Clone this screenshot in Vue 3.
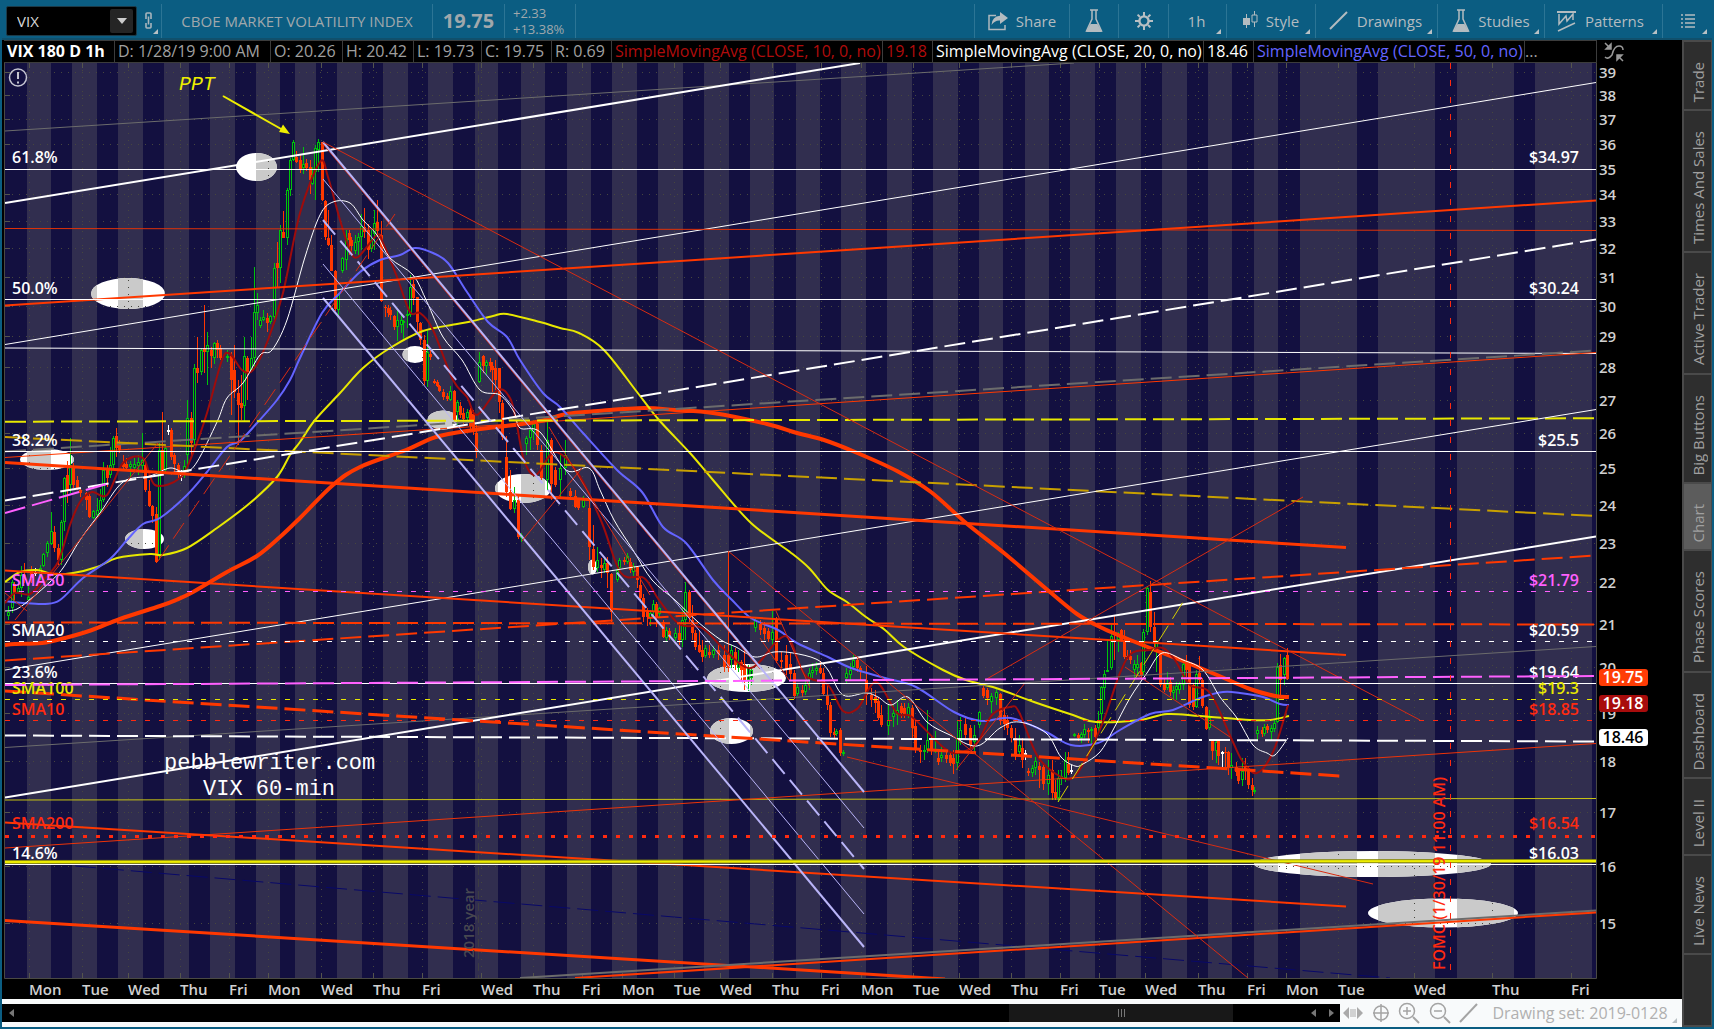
<script setup>
import { ref } from 'vue'

const symbol = ref('VIX')

const infoCells = [
  { t: 'VIX 180 D 1h', c: 'strong' },
  { t: 'D: 1/28/19 9:00 AM' },
  { t: 'O: 20.26' },
  { t: 'H: 20.42' },
  { t: 'L: 19.73' },
  { t: 'C: 19.75' },
  { t: 'R: 0.69' },
  { t: 'SimpleMovingAvg (CLOSE, 10, 0, no)', c: 'sma10' },
  { t: '19.18', c: 'sma10' },
  { t: 'SimpleMovingAvg (CLOSE, 20, 0, no)', c: 'sma20' },
  { t: '18.46', c: 'sma20' },
  { t: 'SimpleMovingAvg (CLOSE, 50, 0, no)', c: 'sma50' },
  { t: '...', c: 'more' },
]

const tabs = ['Trade', 'Times And Sales', 'Active Trader', 'Big Buttons', 'Chart', 'Phase Scores', 'Dashboard', 'Level II', 'Live News']

// Plot area: x 5..1596, y 63..978. Price axis is logarithmic.
const priceY = (p) => Math.round(72.3 + 890.6 * Math.log(39 / p)) + 0.5
const prices = Array.from({ length: 25 }, (_, i) => 39 - i)

// Lighter session bands as [start, end]
const bands = [
  [27, 51], [72, 97], [118, 143], [164, 189], [210, 235], [256, 280], [295, 316], [337, 362], [383, 408],
  [428, 453], [475, 498], [521, 545], [567, 591], [612, 637], [658, 683], [704, 729], [750, 774], [796, 820],
  [841, 866], [887, 912], [933, 958], [979, 1003], [1025, 1049], [1070, 1095], [1116, 1141], [1162, 1187],
  [1208, 1232], [1254, 1278], [1300, 1357], [1378, 1435], [1457, 1514], [1535, 1592],
]

const days = [
  [29, 'Mon'], [82, 'Tue'], [128, 'Wed'], [180, 'Thu'], [229, 'Fri'], [268, 'Mon'], [321, 'Wed'], [373, 'Thu'],
  [422, 'Fri'], [481, 'Wed'], [533, 'Thu'], [582, 'Fri'], [622, 'Mon'], [674, 'Tue'], [720, 'Wed'], [772, 'Thu'],
  [821, 'Fri'], [861, 'Mon'], [913, 'Tue'], [959, 'Wed'], [1011, 'Thu'], [1060, 'Fri'], [1099, 'Tue'],
  [1145, 'Wed'], [1198, 'Thu'], [1247, 'Fri'], [1286, 'Mon'], [1338, 'Tue'], [1414, 'Wed'], [1492, 'Thu'], [1571, 'Fri'],
]

const ellipses = [
  [256.5, 167, 20.5, 14], [128, 293.5, 37, 15.5], [415, 354.5, 12.5, 8.5], [443, 420, 15.5, 9.5],
  [47, 459.5, 27, 10.5], [144.5, 539, 19.5, 10], [523, 488.5, 28, 14.5], [592.5, 567, 4.5, 7.5],
  [746.5, 678, 39.5, 14], [731.5, 731, 21.5, 13], [1372.5, 864, 118.5, 13], [1443, 913, 75, 14.5],
]

const RED = '#ff3800'
const THIN = '#d82c12'
const LAV = '#b9b4f8'
const W = '#ffffff'
const Y = '#e8e800'
const GREY = '#6c6c6c'

// Drawings: [x1, y1, x2, y2, colour, width, dash]
const drawings = [
  [5, 131, 1074, 63, GREY, 1],
  [5, 203, 860, 63, W, 2],
  [5, 344.5, 1596, 82.5, W, 1],
  [5, 228.5, 1596, 230.5, '#e03208', 1],
  [5, 305.5, 1596, 200.5, RED, 2],
  [5, 348, 1596, 353.5, W, 1],
  [5, 451.5, 1596, 350.5, GREY, 2, '21 7'],
  [5, 457.5, 1596, 352.5, RED, 1],
  [5, 421.7, 1596, 418.3, Y, 2, '21 7'],
  [5, 437, 1596, 516, '#c8a000', 2, '21 7'],
  [5, 670, 1596, 409.5, W, 1],
  [5, 747.5, 1596, 646.5, GREY, 1],
  [5, 797.5, 1596, 536.5, W, 2],
  [5, 800, 1596, 798.5, '#c8c414', 1],
  [5, 848, 1596, 743.5, '#ee3408', 1],
  [75, 866, 1390, 978, '#080868', 1, '21 7'],
  [5, 735.5, 1596, 741.5, W, 2, '21 7'],
  [5, 500.5, 1596, 239.5, W, 2, '21 7'],
  [5, 622.5, 1596, 624.5, RED, 2, '21 7'],
  [5, 660.5, 1596, 555.5, RED, 2, '21 7'],
  [5, 570.5, 1346, 655, RED, 2],
  [5, 822.5, 1346, 906.5, RED, 2],
  [5, 462.5, 1346, 547.5, RED, 3],
  [5, 920.5, 945, 979, RED, 3],
  [5, 691, 1340, 776, RED, 3, '21 7'],
  [520, 978, 1596, 910.5, GREY, 2],
  [575, 978, 1596, 912.5, RED, 2],
  [5, 513, 107, 484, '#ff60ff', 2, '21 7'],
  [323, 144, 760, 669, THIN, 1],
  [323, 142, 864, 792, LAV, 2],
  [323, 179, 864, 828, LAV, 1],
  [323, 220, 864, 869, LAV, 2, '19 8'],
  [323, 264, 864, 914, LAV, 1],
  [323, 298, 864, 947, LAV, 2],
  [323, 142, 1156, 581, THIN, 1],
  [1156, 581, 1420, 720, THIN, 1],
  [728, 551, 1248, 978, THIN, 1],
  [847, 757, 1373, 884, THIN, 1],
  [956, 770, 1025, 683, THIN, 1],
  [985, 680, 1303, 497, THIN, 1],
  [522, 541, 582, 468, THIN, 1],
  [549, 427, 650, 595, THIN, 1],
  [776, 611, 810, 688, THIN, 1],
  [760, 638, 789, 680, THIN, 1],
  [15, 620, 158, 443, THIN, 1],
  [5, 593, 27, 611, THIN, 1],
  [158, 561, 395, 214, THIN, 1, '19 8'],
  [1125, 667, 1230, 737, THIN, 1],
  [1058, 802, 1183, 602, '#d6d000', 1, '19 8'],
]

const levels = [
  { l: '61.8%', r: '$34.97', y: 169.5, c: W, ty: 163 },
  { l: '50.0%', r: '$30.24', y: 299.5, c: W, ty: 294 },
  { l: '38.2%', r: '$25.5', y: 451.5, c: W, ty: 446 },
  { l: 'SMA50', r: '$21.79', y: 591.5, c: '#ff60ff', d: '5 9', ty: 586 },
  { l: 'SMA20', r: '$20.59', y: 641.5, c: W, d: '5 9', ty: 636 },
  { l: '23.6%', r: '$19.64', y: 683.5, c: W, ty: 678 },
  { l: 'SMA100', r: '$19.3', y: 699.5, c: Y, d: '5 9', ty: 694 },
  { l: 'SMA10', r: '$18.85', y: 720.5, c: '#ff2a10', d: '5 9', ty: 715 },
  { l: 'SMA200', r: '$16.54', y: 836.5, c: '#ff2a10', d: '4 9', w: 3, ty: 829 },
  { l: '14.6%', r: '$16.03', y: 864.5, c: W, ty: 859 },
]

// Moving averages, flat x,y lists
const averages = [
  { c: RED, w: 4, p: '5,645 15,644 42,643 65,638 92,630 120,619 160,606 176,600 193,592 227,572 257,556 280,537 300,518 333,485 360,467 406,450 436,437 474,430 536,422 566,414 598,411 644,408 675,410 713,413 767,424 797,433 824,440 855,452 897,471 931,492 966,523 1004,553 1050,592 1077,614 1100,627 1123,637 1150,648 1183,661 1217,675 1250,689 1275,696 1289,697' },
  { c: Y, w: 2, p: '5,582 20,572 37,570 53,574 73,573 97,567 117,558 150,554 163,555 187,548 217,528 250,503 277,477 290,455 300,442 315,420 340,393 363,368 390,348 423,331 457,324 473,321 493,316 507,314 540,322 560,328 579,333 604,350 637,392 659,420 690,453 713,480 751,523 790,552 809,568 828,590 847,602 866,617 885,630 904,647 943,670 966,680 996,688 1034,702 1073,715 1096,722 1140,720 1167,714 1200,716 1250,720 1270,720 1289,716' },
  { c: '#6464ff', w: 2, p: '5,601 23,603 45,604 60,600 83,578 110,559 127,540 143,524 160,518 187,495 207,472 227,447 240,441 257,423 277,400 290,380 300,358 322,313 340,293 360,272 380,260 400,255 415,248 433,253 448,263 467,292 488,322 507,337 520,360 543,393 560,407 583,433 617,470 642,492 663,527 686,543 713,580 732,600 751,618 778,630 797,643 828,657 851,668 885,678 916,687 954,712 981,721 1011,718 1046,732 1071,745 1098,743 1120,730 1150,714 1173,710 1200,698 1223,692 1240,693 1263,697 1280,704 1289,705' },
  { c: '#9e0c0c', w: 2, p: '5,603 15,593 30,594 43,580 58,562 70,525 80,502 92,492 107,495 123,463 143,458 155,485 180,478 193,453 207,413 222,360 230,354 242,370 253,370 268,340 283,293 300,213 320,162 328,177 340,220 350,250 358,257 377,235 383,243 397,277 410,312 420,313 433,330 453,380 467,397 477,415 498,390 510,398 516,420 524,460 536,475 555,452 579,475 602,523 621,573 644,578 659,600 679,624 702,628 725,650 751,668 778,640 790,640 805,675 828,685 843,711 858,708 876,682 897,713 912,717 943,747 958,753 977,743 992,715 1010,707 1019,712 1038,757 1061,777 1074,777 1087,757 1103,722 1120,673 1132,653 1150,650 1163,648 1175,660 1190,685 1210,693 1232,740 1243,762 1257,773 1273,752 1288,705' },
  { c: W, w: 1, p: '5,611 17,609 33,597 50,582 63,568 80,540 100,513 123,482 150,476 170,468 185,472 197,462 217,422 227,398 243,383 260,355 272,350 287,320 305,257 320,215 333,202 350,203 363,220 377,235 390,258 413,275 427,302 443,337 462,360 480,390 500,395 514,412 520,428 540,432 566,470 589,468 600,490 614,520 633,550 652,580 675,600 698,622 721,640 736,647 755,657 774,652 793,653 816,659 828,670 843,695 866,693 878,697 891,705 908,697 927,722 950,735 977,746 1000,728 1019,722 1046,733 1061,757 1075,766 1083,764 1100,752 1113,730 1130,698 1147,673 1162,653 1183,660 1203,670 1220,697 1237,718 1253,745 1267,753 1275,755 1288,738' },
]

function smooth(list) {
  const p = list.split(' ').map((s) => s.split(',').map(Number))
  let d = `M${p[0][0]} ${p[0][1]}`
  for (let i = 0; i < p.length - 1; i++) {
    const a = p[Math.max(i - 1, 0)]
    const b = p[i]
    const c = p[i + 1]
    const e = p[Math.min(i + 2, p.length - 1)]
    d += `C${b[0] + (c[0] - a[0]) / 6} ${b[1] + (c[1] - a[1]) / 6} ${c[0] - (e[0] - b[0]) / 6} ${c[1] - (e[1] - b[1]) / 6} ${c[0]} ${c[1]}`
  }
  return d
}

// Candles: direction, x, high, low, body top, body bottom
const candleData = `g8,606,620,612,616 g12,580,613,582,608 r14,582,600,584,592 g18,583,593,588,592 g21,566,597,575,588 r24,563,583,575,580
g28,586,600,597,600 r31,566,583,570,578 w35,568,576,572,573 g40,565,580,568,576 g43,553,567,554,566 g47,541,557,543,553 g51,512,545,531,544 r54,526,552,532,548
r58,544,565,548,560 g61,520,565,522,560 g64,477,531,478,522 r67,461,503,475,490 g70,438,493,465,485 r73,463,488,468,485
r77,476,490,480,488 r80,488,497,490,493 r86,492,510,493,500 r89,494,518,496,517 g93,510,519,511,518 g97,498,517,510,515 g100,489,513,500,510 g103,462,502,470,500
r107,465,487,470,478 g110,447,478,465,475 g113,436,468,438,465 r116,428,457,436,448 r119,440,453,444,450 r123,455,470,462,467 r126,458,470,464,468
g130,461,477,464,467 g134,458,473,464,468 g138,455,475,462,466 g142,433,473,460,466 r145,462,492,465,490 r149,480,507,491,506 r152,505,523,506,516
r156,507,563,514,562 g159,443,560,450,555 r162,412,473,450,470 g165,445,473,448,470 w168,425,435,430,431 r171,428,460,430,457 r174,453,472,455,464
r178,463,480,465,473 w181,470,481,475,476 g184,460,478,466,474 g187,400,470,418,455 r191,412,457,418,443 g194,364,445,368,440 r197,337,383,368,373 g201,348,375,350,372
r204,305,373,348,352 g207,332,385,345,352 r211,347,368,350,356 g214,342,364,343,358 r217,340,358,343,350 r220,345,360,348,358 g227,350,362,356,358 r231,352,415,356,380
r234,345,398,370,392 r238,380,445,393,405 r241,375,420,403,408 g244,337,422,356,406 r247,356,400,358,372 g251,337,371,358,370 g254,267,368,312,358
g257,293,320,305,313 g260,317,328,320,326 g263,310,321,317,320 r267,313,332,318,323 g270,315,324,316,322 g274,263,323,268,317 r277,242,287,263,268
g280,225,283,230,268 r283,211,238,232,238 g287,188,245,190,238 g290,158,196,160,190 g293,140,161,142,160 r296,151,163,157,162 r300,155,173,160,170
g303,147,174,164,168 r306,159,171,163,168 r310,160,194,167,180 g312,167,185,175,184 g315,145,200,148,172 g318,139,172,142,150 r322,142,201,142,200
r325,200,240,201,237 r328,210,246,238,245 r331,235,271,245,271 r335,270,311,271,309 g338,293,318,294,310 g342,257,273,258,271 g346,230,270,238,260
r349,230,255,233,240 r351,237,252,240,246 g355,235,254,242,251 g358,233,255,237,242 g361,214,250,226,237 r364,208,238,227,232 r368,224,259,230,250
g371,230,252,240,249 g374,210,250,223,234 r377,200,237,222,231 r381,221,302,235,301 r385,305,317,307,308 r388,305,317,308,313 r390,307,320,310,315
r394,315,330,316,327 g397,310,341,320,327 g401,315,333,320,325 g403,320,340,321,323 g407,310,328,314,316 g410,275,317,287,315 r413,280,305,284,298
r417,297,333,297,322 r420,322,345,323,340 r424,335,385,340,381 g427,330,387,352,381 r430,350,360,354,357 r434,379,384,381,383 r437,380,387,382,386
r439,385,392,386,391 r443,389,400,392,397 r447,393,401,396,399 g450,386,401,391,400 r454,390,422,391,420 g457,400,425,402,412 r460,402,418,406,415
r463,408,424,413,419 g467,409,422,412,418 r470,408,430,410,426 r473,410,435,414,430 r476,425,458,433,452 g479,352,383,362,382 r483,355,373,356,366 g486,360,375,362,366
r490,358,372,362,366 r492,362,392,366,370 r495,360,390,368,380 r499,368,413,368,402 r502,400,440,403,437 r506,436,497,457,492 r510,470,510,492,509
g514,487,513,500,509 r518,495,539,500,537 g521,533,542,535,538 g526,436,455,438,444 g530,427,450,430,438 g533,420,440,424,432 r537,423,450,424,445
r541,445,480,450,478 g547,421,490,440,480 r551,438,500,440,484 r555,467,487,470,485 g560,455,497,468,480 g565,440,475,455,468 r570,488,500,491,496
r575,490,508,496,507 r578,498,510,500,508 g583,496,508,500,507 r589,500,560,508,547 r593,525,570,549,567 g597,547,572,560,568 r601,558,578,565,568
g604,558,573,563,570 r607,557,588,563,573 r611,573,622,574,612 g617,567,582,570,580 g619,558,570,560,568 r624,557,565,560,562 g627,553,564,556,562
r630,558,573,562,570 g633,563,576,566,572 r637,566,588,567,580 r640,577,600,585,598 r643,594,622,598,617 r647,608,626,612,617 g650,610,626,613,618 g653,600,617,604,612
r656,602,627,604,617 g659,607,618,608,614 r663,620,638,622,637 g666,627,641,630,638 r669,628,640,631,637 g675,628,641,633,638 r679,622,645,633,640
g682,608,647,620,640 g685,582,640,592,620 r689,590,622,592,618 r692,605,640,620,633 r695,630,650,633,647 r699,630,653,645,652 r702,640,662,650,657
g705,645,658,648,656 r709,645,658,652,655 g713,646,658,650,655 r718,643,660,650,654 r724,645,672,655,667 r728,551,672,655,668 g731,645,668,650,660
r735,648,670,652,665 g738,650,672,662,668 r741,660,680,662,670 r744,650,690,665,680 g748,665,691,668,680 g751,668,685,670,678 g755,617,632,620,628
r760,620,635,624,630 r764,622,640,628,634 r768,628,642,631,639 g772,611,645,632,640 r776,617,663,619,661 r781,652,668,660,662 r786,645,675,655,669
r790,653,680,664,674 r794,670,699,673,696 g797,683,696,687,694 r802,685,697,690,693 g805,680,695,685,692 g809,668,690,673,680 g812,663,678,670,673
g816,662,675,668,671 r820,661,674,668,673 r823,668,695,673,694 r827,683,710,695,705 r830,702,737,705,733 r834,728,738,732,735 g836,729,736,731,734
r840,728,756,730,753 g843,750,756,752,753 g846,668,683,673,678 g850,663,680,670,675 g853,655,670,660,667 r857,658,672,660,668 r860,666,680,668,672
r866,666,705,680,695 r871,688,707,695,700 r875,690,713,697,703 r878,697,720,701,718 r881,705,727,715,725 g888,705,735,720,726 g893,705,727,713,717
g897,700,725,710,715 r901,703,718,706,713 r904,703,718,708,715 g908,703,718,707,715 r912,705,740,708,728 r915,720,753,726,750 r920,745,763,750,752
g924,745,760,750,752 g927,710,753,740,750 r931,735,755,740,750 g935,731,753,750,751 r938,750,765,758,762 g941,745,762,755,758 r946,750,763,755,759
r950,752,766,755,763 r953,750,774,758,764 g957,720,770,738,763 g960,717,745,730,740 r965,718,740,724,735 r970,725,748,728,745 g974,725,753,735,742
g979,711,728,712,725 r983,685,698,688,696 r987,688,705,690,698 g991,693,713,696,702 g996,688,705,692,698 r1000,693,725,694,720 r1004,708,730,715,724
r1007,715,735,720,728 r1011,725,742,728,738 r1015,728,760,738,755 g1019,735,757,745,752 r1022,738,768,748,760 w1025,750,760,753,754 r1028,768,776,771,773
g1032,765,777,768,773 g1035,757,775,761,768 r1039,762,788,766,770 r1043,763,790,767,784 g1048,760,795,775,784 r1052,760,800,770,793 r1055,780,800,792,798
g1058,770,802,778,798 g1061,770,785,776,779 g1065,752,782,760,778 r1068,752,775,764,773 w1071,765,774,770,771 g1074,733,737,734,736 r1078,733,741,735,738
g1081,732,743,734,738 g1084,724,738,729,735 r1088,728,743,730,732 g1091,727,745,729,731 r1095,725,743,728,737 g1098,711,733,720,728 g1101,686,726,687,714
g1104,670,700,674,688 g1107,640,672,670,672 g1111,625,670,636,668 r1114,616,660,633,634 g1118,632,652,635,640 r1121,629,642,630,640 r1124,630,659,641,657
r1127,650,660,656,657 r1130,650,664,656,660 g1134,660,678,664,670 g1137,655,674,664,668 r1141,662,680,663,676 g1143,629,675,632,672 g1147,586,635,588,632
r1150,581,632,592,627 r1154,612,647,627,642 g1156,640,672,643,650 r1160,650,687,652,685 r1164,678,692,684,690 g1167,672,690,684,688 r1170,677,696,682,692
g1173,686,700,690,693 g1176,682,700,686,690 g1179,682,694,684,690 g1183,660,690,664,685 r1186,655,677,661,670 r1189,662,708,665,705 r1193,683,710,685,707
g1196,670,708,674,707 r1199,656,683,673,680 r1202,678,708,680,706 r1206,706,730,707,729 g1209,710,730,718,728 r1212,739,760,741,751 g1216,739,763,742,751
r1218,739,765,741,756 w1222,751,767,752,753 r1225,747,768,752,753 r1228,751,775,752,768 g1231,753,779,765,768 r1236,762,776,767,772 r1238,768,784,770,781
g1242,758,786,771,780 r1245,758,780,767,770 r1248,766,789,768,785 r1252,778,796,785,790 g1254,787,794,790,792 g1257,726,740,730,734 r1262,727,737,730,734
g1264,724,736,727,734 r1267,724,733,726,730 g1271,725,741,728,732 g1274,720,732,723,729 g1277,663,723,667,722 r1280,654,697,665,680 g1284,657,685,658,675 r1287,648,680,655,679`

const colours = { g: '#00c40a', r: '#ff3800', w: '#ffffff' }
const candles = candleData.split(/\s+/).map((s) => {
  const [x, hi, lo, top, bottom] = s.slice(1).split(',').map(Number)
  return { k: s[0], x, hi, lo, top, bottom, c: colours[s[0]] }
})
</script>

<template>
  <div class="app">
    <header class="toolbar">
      <div class="symbol-box">
        <input v-model="symbol" class="symbol" type="text" aria-label="Symbol" />
        <button class="drop" aria-label="Choose symbol">
          <svg width="10" height="6"><path d="M0 0H10L5 6Z" fill="#ccc" /></svg>
        </button>
      </div>
      <button class="link" aria-label="Link">
        <svg width="10" height="20" viewBox="0 0 10 20" fill="none" stroke="#a9b6bd" stroke-width="1.6">
          <path d="M2 8V3Q2 2 3 2H6Q7 2 7 3V8M2 12V16Q2 17 3 17H6Q7 17 7 16V12M4.500 5.500V13.500" />
        </svg>
        <i class="corner"></i>
      </button>
      <div class="name">CBOE MARKET VOLATILITY INDEX</div>
      <div class="last">19.75</div>
      <div class="change"><span>+2.33</span><span>+13.38%</span></div>
      <nav class="tools">
        <button class="share">
          <svg width="20" height="19" viewBox="0 0 20 19">
            <path d="M8 3.500H1V17.500H17V13" fill="none" stroke="#aeb8bd" stroke-width="1.500" />
            <path d="M12 0L20 6L12 12V8.500Q7 8 3.500 13Q4 4.500 12 3.800Z" fill="#b4bcc0" />
          </svg>
          Share
        </button>
        <button class="w-flask" aria-label="Edit studies">
          <svg width="18" height="24" viewBox="0 0 18 24">
            <path d="M5 1H13M7 1V10L1.500 22H16.500L11 10V1" fill="none" stroke="#b4bcc0" stroke-width="1.500" />
            <path d="M5.500 15H12.500L17 23H1Z" fill="#b4bcc0" />
          </svg>
        </button>
        <button class="w-gear" aria-label="Chart settings">
          <svg width="20" height="20" viewBox="-10 -10 20 20" fill="none" stroke="#b8bfc3">
            <circle r="4.600" stroke-width="2.400" />
            <path d="M0-9V-5M0 9V5M-9 0H-5M9 0H5M-6.400-6.400L-4-4M6.400 6.400L4 4M6.400-6.400L4-4M-6.400 6.400L-4 4" stroke-width="2" />
          </svg>
        </button>
        <button class="w-time">1h<i class="corner"></i></button>
        <button class="w-style">
          <svg width="15" height="20" viewBox="0 0 15 20">
            <path d="M3.500 3V17" stroke="#b4bcc0" />
            <path d="M0 7H7V14H0Z" fill="#b4bcc0" />
            <path d="M11.500 0V4M11.500 11V16M9 4H14V11H9Z" fill="none" stroke="#b4bcc0" />
          </svg>
          Style<i class="corner"></i>
        </button>
        <button class="w-drawings">
          <svg width="20" height="20"><path d="M1 18L18 1" stroke="#b4bcc0" stroke-width="2" /></svg>
          Drawings<i class="corner"></i>
        </button>
        <button class="w-studies">
          <svg width="18" height="24" viewBox="0 0 18 24">
            <path d="M5 1H13M7 1V10L1.500 22H16.500L11 10V1" fill="none" stroke="#b4bcc0" stroke-width="1.500" />
            <path d="M5.500 15H12.500L17 23H1Z" fill="#b4bcc0" />
          </svg>
          Studies<i class="corner"></i>
        </button>
        <button class="w-patterns">
          <svg width="20" height="21" viewBox="0 0 20 21" fill="none" stroke="#b4bcc0" stroke-width="1.500">
            <path d="M0 1H19" stroke-width="2" />
            <path d="M2 3V13L9 5L10 10L16 3V9M1 20L18 12" />
          </svg>
          Patterns<i class="corner"></i>
        </button>
        <button class="w-list" aria-label="Menu">
          <svg width="14" height="14" viewBox="0 0 14 14" stroke="#b4bcc0" stroke-width="1.500">
            <path d="M0 1H2M4 1H14M0 5H2M4 5H14M0 9H2M4 9H14M0 13H2M4 13H14" />
          </svg>
          <i class="corner"></i>
        </button>
      </nav>
    </header>

    <div class="body">
      <main class="work">
        <div class="info">
          <div class="cells">
            <span v-for="(cell, i) in infoCells" :key="i" :class="cell.c">{{ cell.t }}</span>
          </div>
          <button class="fit" aria-label="Fit chart">
            <svg width="20" height="20" viewBox="0 0 20 20" fill="none" stroke="#999" stroke-width="1.500">
              <path d="M1 15Q4 18 8 13Q10 4 15 4Q19 4 19 8M1 1L6 6M19 19L14 14" />
              <path d="M7 2V7H2ZM13 18V13H18Z" fill="#999" />
            </svg>
          </button>
        </div>

        <svg class="chart" viewBox="2 63 1680 936" preserveAspectRatio="none" role="img" aria-label="VIX hourly chart">
          <defs>
            <clipPath id="plot"><rect x="5" y="63" width="1591" height="915" /></clipPath>
            <clipPath id="spots">
              <ellipse v-for="(e, i) in ellipses" :key="i" :cx="e[0]" :cy="e[1]" :rx="e[2]" :ry="e[3]" />
            </clipPath>
          </defs>
          <rect x="2" y="63" width="1680" height="936" fill="#000" />
          <g clip-path="url(#plot)">
            <rect x="5" y="63" width="1591" height="915" fill="#131040" />
            <rect v-for="b in bands" :key="b[0]" :x="b[0]" y="63" :width="b[1] - b[0]" height="915" fill="#312e4f" />
            <g clip-path="url(#spots)">
              <rect x="5" y="63" width="1591" height="915" fill="#fff" />
              <rect v-for="b in bands" :key="b[0]" :x="b[0]" y="63" :width="b[1] - b[0]" height="915" fill="#cacaca" />
            </g>
            <g stroke="#46463f" stroke-width="1" stroke-dasharray="1 6">
              <line v-for="p in prices" :key="p" x1="5" x2="1596" :y1="priceY(p)" :y2="priceY(p)" />
              <line v-for="d in days" :key="d[0]" :x1="d[0] + 0.5" :x2="d[0] + 0.5" y1="63" y2="978" />
            </g>
            <line x1="478.5" x2="478.5" y1="63" y2="978" stroke="#3c3c42" stroke-dasharray="8 4" />
            <g stroke="#55554c">
              <line v-for="p in prices" :key="p" x1="5" x2="10" :y1="priceY(p)" :y2="priceY(p)" />
              <line v-for="d in days" :key="d[0]" :x1="d[0] + 0.5" :x2="d[0] + 0.5" y1="63" y2="68" />
              <line v-for="d in days" :key="'b' + d[0]" :x1="d[0] + 0.5" :x2="d[0] + 0.5" y1="973" y2="978" />
            </g>

            <g v-for="(k, i) in candles" :key="i" shape-rendering="crispEdges">
              <line :x1="k.x + 0.5" :x2="k.x + 0.5" :y1="k.hi" :y2="k.lo" :stroke="k.c" />
              <rect v-if="k.k === 'r'" :x="k.x - 1" :y="k.top" width="3" :height="Math.max(k.bottom - k.top, 1)" :fill="k.c" />
              <rect v-else :x="k.x - 0.5" :y="k.top + 0.5" width="2" :height="Math.max(k.bottom - k.top - 1, 1)" fill="#131040" :stroke="k.c" />
            </g>

            <path v-for="a in averages" :key="a.c" :d="smooth(a.p)" fill="none" :stroke="a.c" :stroke-width="a.w" stroke-linejoin="round" />

            <line v-for="(d, i) in drawings" :key="i" :x1="d[0]" :y1="d[1]" :x2="d[2]" :y2="d[3]" :stroke="d[4]" :stroke-width="d[5]" :stroke-dasharray="d[6]" />
            <g v-for="l in levels" :key="l.l">
              <line x1="5" x2="1596" :y1="l.y" :y2="l.y" :stroke="l.c" :stroke-width="l.w || 1" :stroke-dasharray="l.d" />
              <text class="level" x="12" :y="l.ty" :fill="l.c">{{ l.l }}</text>
              <text class="level" x="1579" :y="l.ty" :fill="l.c" text-anchor="end">{{ l.r }}</text>
            </g>
            <line x1="5" y1="862" x2="1596" y2="861" stroke="#8c8c10" stroke-width="4" />
            <line x1="5" y1="862" x2="1596" y2="861" stroke="#eeee00" stroke-width="2" />
            <line x1="5" y1="685" x2="1596" y2="676" stroke="#ff60ff" stroke-width="2" stroke-dasharray="21 7" />
            <line x1="1450.5" x2="1450.5" y1="63" y2="978" stroke="#ff2a10" stroke-dasharray="6 11" />

            <text class="side" fill="#484850" transform="translate(474 958) rotate(-90)">2018 year</text>
            <text class="side event" fill="#ff2a10" transform="translate(1445 970) rotate(-90)">FOMC (1/30/19 11:00 AM)</text>

            <text class="note ppt" x="179" y="90">PPT</text>
            <path d="M223 96L282 129.500" stroke="#eeee00" stroke-width="2" />
            <path d="M290 134L279 132L283 124.500Z" fill="#eeee00" />
            <text class="note" x="164" y="769">pebblewriter.com</text>
            <text class="note" x="203" y="795">VIX 60-min</text>
          </g>

          <g fill="none" stroke="#c4c4d0" stroke-width="1.500">
            <circle cx="18" cy="77.500" r="8.500" />
            <path d="M18 72V79M18 81.500V83.500" stroke-width="2" />
          </g>

          <path d="M4.500 63V978.500H1596.500V63" fill="none" stroke="#4a4a44" />
          <g class="axis">
            <text v-for="p in prices" :key="p" x="1599" :y="priceY(p) + 5.5">{{ p }}</text>
            <text v-for="d in days" :key="d[0]" :x="d[0]" y="995">{{ d[1] }}</text>
          </g>
          <g class="badge">
            <rect x="1599" y="669" width="49" height="17" rx="3" fill="#ff3c05" />
            <rect x="1599" y="695" width="49" height="17" rx="3" fill="#a80c0c" />
            <rect x="1599" y="729" width="49" height="17" rx="3" fill="#fff" />
            <text x="1623" y="683" fill="#fff">19.75</text>
            <text x="1623" y="709" fill="#fff">19.18</text>
            <text x="1623" y="743" fill="#000">18.46</text>
          </g>
        </svg>

        <footer class="bottom">
          <div class="scroll">
            <button aria-label="Scroll to start"><svg width="5" height="8"><path d="M5 0V8L0 4Z" fill="#777" /></svg></button>
            <div class="track">
              <div class="thumb"><i></i><i></i><i></i></div>
            </div>
            <button aria-label="Scroll left"><svg width="5" height="8"><path d="M5 0V8L0 4Z" fill="#777" /></svg></button>
            <button aria-label="Scroll right"><svg width="5" height="8"><path d="M0 0V8L5 4Z" fill="#777" /></svg></button>
          </div>
          <div class="zoomers">
            <button aria-label="Expand"><svg width="20" height="14" viewBox="0 0 20 14"><path d="M6 1V13L0 7ZM14 1V13L20 7Z" fill="#aaa" /><path d="M8 3V11M10 3V11M12 3V11" stroke="#aaa" /></svg></button>
            <button aria-label="Crosshair"><svg width="18" height="18" viewBox="0 0 18 18" fill="none" stroke="#a4a4a4" stroke-width="1.500"><circle cx="9" cy="9" r="7" /><path d="M9 0V18M1 9H17" /></svg></button>
            <button aria-label="Zoom in"><svg width="22" height="22" viewBox="0 0 22 22" fill="none" stroke="#a4a4a4" stroke-width="1.500"><circle cx="9" cy="9" r="7.500" /><path d="M5 9H13M9 5V13" /><path d="M15 15L21 21" stroke-width="2" /></svg></button>
            <button aria-label="Zoom out"><svg width="22" height="22" viewBox="0 0 22 22" fill="none" stroke="#a4a4a4" stroke-width="1.500"><circle cx="9" cy="9" r="7.500" /><path d="M5 9H13" /><path d="M15 15L21 21" stroke-width="2" /></svg></button>
            <button aria-label="Draw line"><svg width="20" height="20"><path d="M1 19L18 1" stroke="#a4a4a4" stroke-width="2" /></svg></button>
          </div>
          <button class="set">Drawing set: 2019-0128<i class="corner"></i></button>
        </footer>
      </main>

      <aside class="tabs">
        <button v-for="t in tabs" :key="t" :class="{ active: t === 'Chart' }"><span>{{ t }}</span></button>
        <div class="rest"></div>
      </aside>
    </div>
  </div>
</template>

<style>
body {
  margin: 0;
  background: #000;
}
</style>

<style scoped>
.app {
  box-sizing: border-box;
  min-height: 100vh;
  display: flex;
  flex-direction: column;
  border: solid #0b5d82;
  border-width: 0 2px 2px;
  background: #0b5d82;
  font-family: "Open Sans", "Noto Sans", sans-serif;
  font-size: 15px;
}
button {
  position: relative;
  margin: 0;
  padding: 0;
  border: 0;
  background: none;
  font: inherit;
  color: inherit;
  display: flex;
  align-items: center;
  justify-content: center;
}
.corner {
  position: absolute;
  right: 5px;
  bottom: 4px;
  width: 5px;
  height: 5px;
  background: #b8c0c4;
  clip-path: polygon(100% 0, 100% 100%, 0 100%);
}
.toolbar {
  height: 40px;
  box-sizing: border-box;
  padding-top: 4px;
  border-bottom: 2px solid #10506c;
  display: flex;
  color: #a0a8ac;
  white-space: nowrap;
}
.symbol-box {
  display: flex;
  align-items: center;
  box-sizing: border-box;
  width: 131px;
  height: 30px;
  margin: 2px 0 0 4px;
  padding: 0 3px 0 8px;
  background: #000;
  border: 1px solid #1c3a48;
  border-radius: 2px;
}
.symbol {
  flex: 1;
  min-width: 0;
  padding: 0 0 0 2px;
  border: 0;
  outline: 0;
  background: none;
  color: #d8d8d8;
  font: inherit;
}
.drop {
  width: 23px;
  height: 24px;
  background: #252525;
  border-radius: 2px;
}
.link {
  width: 24px;
}
.link .corner {
  right: 3px;
}
.name,
.last,
.change,
.tools > button {
  box-sizing: border-box;
  border-left: 1px solid #2c7595;
}
.name {
  width: 271px;
  line-height: 34px;
  text-align: center;
}
.last {
  width: 72px;
  line-height: 34px;
  text-align: center;
  font-size: 20px;
  font-weight: 700;
}
.change {
  width: 72px;
  border-right: 1px solid #2c7595;
  padding: 1px 0 0 8px;
  display: flex;
  flex-direction: column;
  font-size: 13px;
  line-height: 16px;
}
.tools {
  display: flex;
  margin-left: auto;
  color: #b4bcc0;
}
.tools > button {
  gap: 8px;
}
.share { width: 95px; }
.w-flask { width: 49px; }
.w-gear { width: 50px; }
.tools .w-time { width: 58px; padding-right: 2px; }
.w-style { width: 89px; }
.tools .w-drawings { width: 122px; padding-right: 2px; }
.w-studies { width: 107px; }
.tools .w-patterns { width: 118px; padding-right: 6px; }
.w-list { width: 50px; }
.body {
  flex: 1;
  display: flex;
}
.work {
  flex: 1;
  min-width: 0;
  display: flex;
  flex-direction: column;
  background: #000;
}
.info {
  height: 23px;
  display: flex;
}
.cells {
  width: 1593px;
  box-sizing: border-box;
  margin-left: 2px;
  display: grid;
  grid-template-columns: 111px 156px 72px 71px 68px 70px 60px 271px 50px 271px 50px 271px auto;
  border: solid #3c3c3c;
  border-width: 1px 1px 1px 0;
  color: #a0a0a0;
  font-size: 16px;
  line-height: 21px;
  white-space: pre;
}
.cells span {
  box-sizing: border-box;
  padding-left: 3px;
  border-right: 1px solid #3c3c3c;
}
.cells .strong { color: #fff; font-weight: 700; }
.cells .sma10 { color: #b00c0c; }
.cells .sma20 { color: #fff; }
.cells .sma50 { color: #6464ff; }
.cells .more { padding-left: 0; border: 0; }
.fit {
  margin-left: 7px;
}
.chart {
  display: block;
  width: 100%;
  flex: 1 1 0;
  height: 0;
  min-height: 400px;
}
.level,
.axis text,
.badge text {
  font-size: 16px;
  font-weight: 600;
}
.axis text {
  fill: #d0d0d0;
  font-size: 15px;
}
.side {
  font-size: 15px;
  font-weight: 600;
}
.side.event {
  font-size: 16px;
}
.badge text {
  text-anchor: middle;
}
.note {
  font-family: "Liberation Mono", monospace;
  font-size: 22px;
  fill: #fff;
}
.note.ppt {
  font-size: 20px;
  font-style: italic;
  fill: #eeee00;
}
.bottom {
  height: 28px;
  display: flex;
  align-items: center;
  background: #f8fafb;
  color: #b0b0b0;
}
.scroll {
  flex: 1;
  height: 18px;
  display: flex;
  background: #000;
}
.scroll button {
  width: 18px;
}
.track {
  flex: 1;
  display: flex;
}
.thumb {
  width: 17.5%;
  margin-left: 77%;
  background: #181818;
  display: flex;
  align-items: center;
  justify-content: center;
  gap: 2px;
}
.thumb i {
  width: 1px;
  height: 8px;
  background: #777;
}
.zoomers {
  display: flex;
  align-items: center;
  width: 136px;
  padding: 0 3px;
  justify-content: space-between;
}
.set {
  width: 200px;
  height: 28px;
  padding-right: 4px;
  box-sizing: border-box;
  font-size: 16px;
}
.tabs {
  width: 30px;
  box-sizing: border-box;
  display: flex;
  flex-direction: column;
  gap: 2px;
  padding: 2px 1px 2px 2px;
  background: #4a4a4a;
  color: #a0a0a0;
}
.tabs button,
.rest {
  background: #2e2e2e;
}
.tabs button {
  width: 100%;
  padding: 20px 0 7px;
}
.tabs .active {
  background: #5c5c5c;
}
.tabs span {
  writing-mode: vertical-rl;
  transform: rotate(180deg);
  line-height: 22px;
  white-space: nowrap;
}
.rest {
  flex: 1;
}
</style>
